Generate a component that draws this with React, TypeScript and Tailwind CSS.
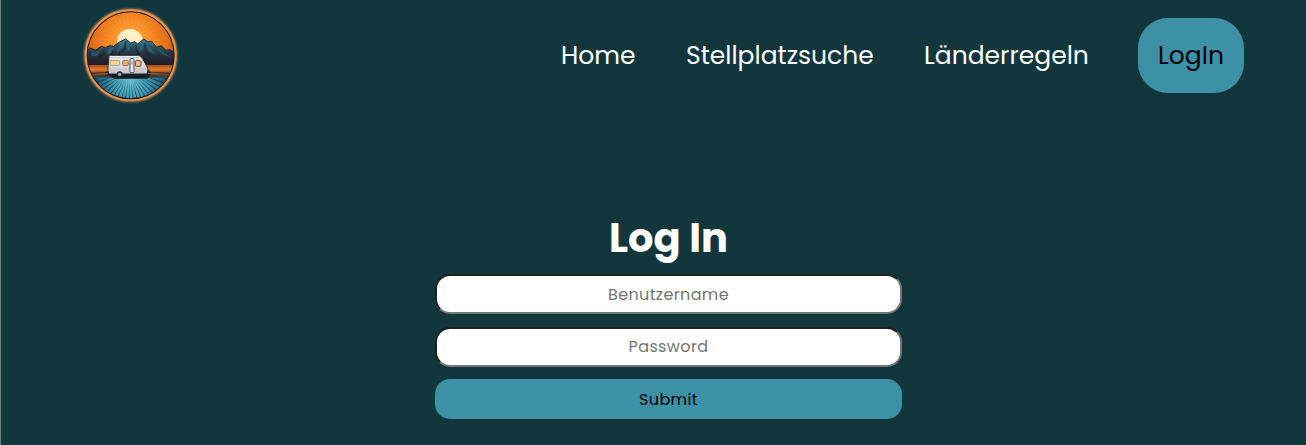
import React from "react";

const waterRays = Array.from({ length: 23 }, (_, i) => {
  const a = (Math.PI * (i + 0.5)) / 23;
  const b = 0.022;
  return `M${160 + 34 * Math.cos(a)} ${212 + 34 * Math.sin(a)} L${160 + 190 * Math.cos(a - b)} ${212 + 190 * Math.sin(a - b)} L${160 + 190 * Math.cos(a + b)} ${212 + 190 * Math.sin(a + b)} Z`;
});
const sunRays = Array.from({ length: 36 }, (_, i) => (i * Math.PI) / 18);

function Logo() {
  return (
    <svg className="block size-[110px]" viewBox="0 0 330 330" role="img" aria-label="Camper">
      <defs>
        <radialGradient id="sky" cx="162" cy="120" r="150" gradientUnits="userSpaceOnUse">
          <stop offset="0.25" stopColor="#fb9c35" />
          <stop offset="0.55" stopColor="#f2801f" />
          <stop offset="1" stopColor="#c95a14" />
        </radialGradient>
        <radialGradient id="sun" cx="162" cy="122" r="42" gradientUnits="userSpaceOnUse">
          <stop offset="0.6" stopColor="#fff2cb" />
          <stop offset="1" stopColor="#ffe3a6" />
        </radialGradient>
        <linearGradient id="peak" x1="0" y1="117" x2="0" y2="195" gradientUnits="userSpaceOnUse">
          <stop offset="0" stopColor="#34869c" />
          <stop offset="0.3" stopColor="#2a5363" />
          <stop offset="0.6" stopColor="#25303b" />
          <stop offset="1" stopColor="#201e28" />
        </linearGradient>
        <linearGradient id="sand" x1="0" y1="195" x2="0" y2="236" gradientUnits="userSpaceOnUse">
          <stop offset="0" stopColor="#a84e1c" />
          <stop offset="0.4" stopColor="#f08528" />
          <stop offset="0.7" stopColor="#7b4225" />
          <stop offset="1" stopColor="#17232d" />
        </linearGradient>
        <radialGradient id="water" cx="164" cy="245" r="125" gradientUnits="userSpaceOnUse">
          <stop offset="0" stopColor="#68bdd0" />
          <stop offset="0.4" stopColor="#3f9cb4" />
          <stop offset="0.75" stopColor="#236079" />
          <stop offset="1" stopColor="#123746" />
        </radialGradient>
        <linearGradient id="body" x1="0" y1="168" x2="0" y2="222" gradientUnits="userSpaceOnUse">
          <stop offset="0" stopColor="#f4f4f7" />
          <stop offset="1" stopColor="#c7c5cb" />
        </linearGradient>
        <clipPath id="disc"><circle cx="164" cy="166" r="129" /></clipPath>
        <filter id="glow" x="-10%" y="-10%" width="120%" height="120%"><feGaussianBlur stdDeviation="3" /></filter>
        <filter id="soft" x="-5%" y="-5%" width="110%" height="110%"><feGaussianBlur stdDeviation="1" /></filter>
      </defs>
      <circle cx="164" cy="166" r="137" fill="none" stroke="#c99a6a" strokeWidth="5" filter="url(#glow)" />
      <circle cx="164" cy="166" r="135" fill="#241c20" stroke="#ee9142" strokeWidth="6" />
      <g clipPath="url(#disc)">
        <g filter="url(#soft)">
          <rect x="25" y="25" width="280" height="185" fill="url(#sky)" />
          {sunRays.map((a) => (
            <line key={a} x1="162" y1="125" x2={162 + 180 * Math.cos(a)} y2={125 + 180 * Math.sin(a)} stroke="#d56614" strokeWidth="2" opacity="0.25" />
          ))}
          <circle cx="162" cy="125" r="39" fill="url(#sun)" />
          <path d="M25 158 L44 144 L58 151 L76 139 L88 143 L101 137 L112 139 L132 125 L149 117 L164 129 L176 125 L185 132 L203 117 L215 125 L228 125 L242 142 L255 137 L271 151 L283 149 L302 163 V205 H25 Z" fill="url(#peak)" stroke="#20252d" strokeWidth="3" />
          <path d="M98 148 L116 141 L104 160 L88 166 Z M132 134 L145 124 L138 145 L120 158 Z M152 131 L161 141 L163 155 L154 147 Z M194 138 L203 128 L199 148 L188 157 Z M211 132 L226 148 L240 166 L219 153 Z M48 156 L62 158 L78 148 L63 168 L44 169 Z M248 149 L268 159 L282 171 L258 164 Z" fill="#3685a0" opacity="0.4" />
          <path d="M149 124 L147 147 L132 158 L126 170 M180 137 L182 153 L190 165 M206 129 L209 151 L222 168 M85 148 L82 161 L66 174 M110 151 L104 173" fill="none" stroke="#1c2029" strokeWidth="5" opacity="0.6" />
          <rect x="25" y="195" width="280" height="44" fill="url(#sand)" />
          <path d="M25 211 H90 L105 217 H25 Z M211 216 L235 211 H305 V218 H218 Z" fill="#8b421e" opacity="0.45" />
          <rect x="25" y="232" width="280" height="75" fill="url(#water)" />
          {waterRays.map((d) => <path key={d} d={d} fill="#112d3b" opacity="0.8" />)}
          <path d="M35 230 H295 V234 H35 Z" fill="#245468" />
          <path d="M91 222 H225 L215 236 H115 Z" fill="#151b25" />
        </g>
      </g>
      <path d="M99 169 Q99 166 104 166 H184 Q193 166 198 173 L215 204 Q217 211 213 222 H99 Q94 212 96 201 Z" fill="url(#body)" stroke="#282932" strokeWidth="3" />
      <path d="M99 207 H214 M103 173 H190" stroke="#c3c2c9" strokeWidth="3" />
      <rect x="102" y="181" width="29" height="15" rx="3" fill="#fbd28b" stroke="#8b7c75" strokeWidth="2" />
      <rect x="140" y="181" width="17" height="16" rx="3" fill="#f2aa5b" stroke="#655b5e" strokeWidth="2" />
      <rect x="162" y="176" width="12" height="42" rx="3" fill="#ececef" stroke="#4b4a53" strokeWidth="3" />
      <path d="M166 182 H170 V194 H166 Z" fill="#d5a56d" />
      <rect x="178" y="182" width="17" height="17" rx="3" fill="#f6c176" stroke="#53484b" strokeWidth="3" />
      <circle cx="131" cy="223" r="9" fill="#26272e" />
      <circle cx="131" cy="223" r="5" fill="#aaa8af" />
      <path d="M87 217 H98 M213 217 H225 M219 209 V219" stroke="#2c2225" strokeWidth="4" />
    </svg>
  );
}

const field =
  "block h-10 w-full rounded-[15px] border-2 border-t-[#212121] border-r-[#767676] border-b-[#767676] border-l-[#212121] bg-white text-center text-base tracking-[0.36px] text-black outline-none placeholder:text-[#757575]";

export default function App() {
  return (
    <div className="h-[445px] overflow-hidden border-l border-[#777b7d] bg-[#11363c] font-['Poppins','Inter',sans-serif]">
      <header className="flex h-[111px] items-center justify-between pr-[62px] pl-[75px]">
        <div className="h-[111px]"><Logo /></div>
        <nav className="flex items-center gap-[50px] text-[25px] leading-[38px] whitespace-nowrap text-white">
          <a href="#home" className="w-[75px]">Home</a>
          <a href="#search" className="w-[188px]">Stellplatzsuche</a>
          <a href="#rules" className="w-[164px]">Länderregeln</a>
          <a href="#login" className="flex h-[75px] w-[106px] items-center justify-center rounded-[30px] bg-[#3c91a6] text-black">LogIn</a>
        </nav>
      </header>
      <main className="ml-[434px] w-[467px] pt-[97px]">
        <h1 className="h-[66px] text-center text-[40px] leading-[60px] font-bold text-white">Log In</h1>
        <form onSubmit={(e) => e.preventDefault()}>
          <input className={field} placeholder="Benutzername" aria-label="Benutzername" />
          <input className={`${field} mt-[13px] pb-0.5`} type="password" placeholder="Password" aria-label="Password" />
          <button className="mt-3 block h-10 w-full rounded-[15px] bg-[#3c91a6] pt-0.5 text-base tracking-[0.36px] text-black">Submit</button>
        </form>
      </main>
    </div>
  );
}
